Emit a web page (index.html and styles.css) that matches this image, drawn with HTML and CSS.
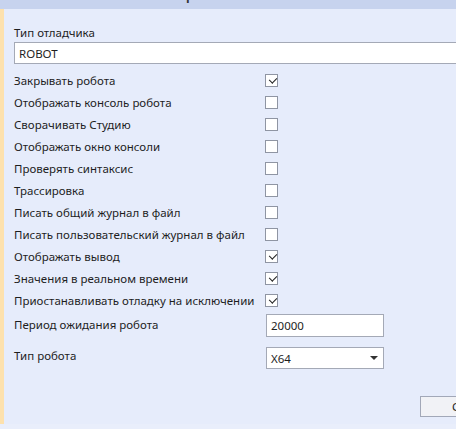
FILE: index.html
```html
<!DOCTYPE html>
<html lang="ru">
<head>
<meta charset="utf-8">
<link rel="stylesheet" href="styles.css">
</head>
<body>
<div class="window">
  <div class="titlebar"><span class="title">Настройки</span></div>
  <div class="main">
    <div class="strip"></div>
    <div class="content">
      <div class="field-label">Тип отладчика</div>
      <div class="textbox wide">ROBOT</div>
      <div class="options">
        <div class="row"><span class="lbl">Закрывать робота</span><span class="cb checked"></span></div>
        <div class="row"><span class="lbl">Отображать консоль робота</span><span class="cb"></span></div>
        <div class="row"><span class="lbl">Сворачивать Студию</span><span class="cb"></span></div>
        <div class="row"><span class="lbl">Отображать окно консоли</span><span class="cb"></span></div>
        <div class="row"><span class="lbl">Проверять синтаксис</span><span class="cb"></span></div>
        <div class="row"><span class="lbl">Трассировка</span><span class="cb"></span></div>
        <div class="row"><span class="lbl">Писать общий журнал в файл</span><span class="cb"></span></div>
        <div class="row"><span class="lbl">Писать пользовательский журнал в файл</span><span class="cb"></span></div>
        <div class="row"><span class="lbl">Отображать вывод</span><span class="cb checked"></span></div>
        <div class="row"><span class="lbl">Значения в реальном времени</span><span class="cb checked"></span></div>
        <div class="row"><span class="lbl">Приостанавливать отладку на исключении</span><span class="cb checked"></span></div>
      </div>
      <div class="row tall"><span class="lbl">Период ожидания робота</span><span class="textbox small">20000</span></div>
      <div class="row tall2"><span class="lbl up">Тип робота</span><span class="textbox small combo">X64<svg class="arrow" width="8" height="4" viewBox="0 0 8 4"><path d="M0 0H8L4 4Z" fill="#333"/></svg></span></div>
      <div class="buttons"><span class="btn">Сохранить</span></div>
    </div>
  </div>
  <div class="footer"></div>
</div>
</body>
</html>
```
FILE: styles.css
```css
html, body {
  margin: 0;
  padding: 0;
  width: 456px;
  height: 429px;
  overflow: hidden;
  background: #e6ecfb;
}
.window {
  font-family: "Noto Sans", "Open Sans", sans-serif;
  font-size: 11.5px;
  color: #1e1e1e;
  width: 456px;
  height: 429px;
  display: flex;
  flex-direction: column;
  overflow: hidden;
}
.titlebar {
  height: 9px;
  background: #c7d3ee;
  position: relative;
  overflow: hidden;
  flex: none;
}
.title {
  position: absolute;
  left: 140px;
  top: -23px;
  font-size: 20px;
  line-height: 28px;
  color: #333;
  white-space: nowrap;
}
.main {
  flex: none;
  height: 415px;
  display: flex;
}
.strip {
  width: 4px;
  background: #fde1ad;
  flex: none;
}
.content {
  flex: 1;
  padding: 15px 0 0 10px;
  overflow: hidden;
  box-sizing: border-box;
}
.field-label {
  height: 17px;
  line-height: 17px;
}
.textbox {
  box-sizing: border-box;
  background: #fff;
  border: 1px solid #a4a9b6;
  padding-left: 4px;
  display: flex;
  align-items: center;
}
.wide {
  margin-top: 1px;
  height: 22px;
  width: 460px;
}
.options {
  margin-top: 5px;
}
.row {
  display: flex;
  align-items: center;
  height: 22px;
}
.lbl {
  width: 251px;
  flex: none;
  white-space: nowrap;
}
.cb {
  width: 13px;
  height: 13px;
  box-sizing: border-box;
  border: 1px solid #8f95a3;
  background: #fff;
  position: relative;
}
.cb.checked::after {
  content: "";
  position: absolute;
  left: 2.5px;
  top: 1px;
  width: 6px;
  height: 3.5px;
  border-left: 1.6px solid #222;
  border-bottom: 1.6px solid #222;
  transform: rotate(-45deg) translate(-0.5px, 1px);
}
.row.tall {
  height: 23px;
  margin-top: 3px;
}
.row.tall .lbl {
  position: relative;
  top: -1px;
}
.small {
  width: 118px;
  height: 23px;
  margin-left: 1px;
}
.row.tall2 {
  height: 22px;
  margin-top: 10px;
}
.lbl.up {
  position: relative;
  top: -3px;
}
.combo {
  height: 22px;
  justify-content: space-between;
  padding-right: 5px;
}
.arrow {
  display: block;
}
.buttons {
  display: flex;
  margin-top: 27px;
}
.btn {
  margin-left: 406px;
  box-sizing: border-box;
  height: 21px;
  width: 100px;
  flex: none;
  border: 1px solid #a2a8b8;
  background: #f1f2f6;
  display: flex;
  align-items: center;
  padding-left: 31px;
}
.footer {
  flex: 1;
  background: #e9eefb;
}
```
